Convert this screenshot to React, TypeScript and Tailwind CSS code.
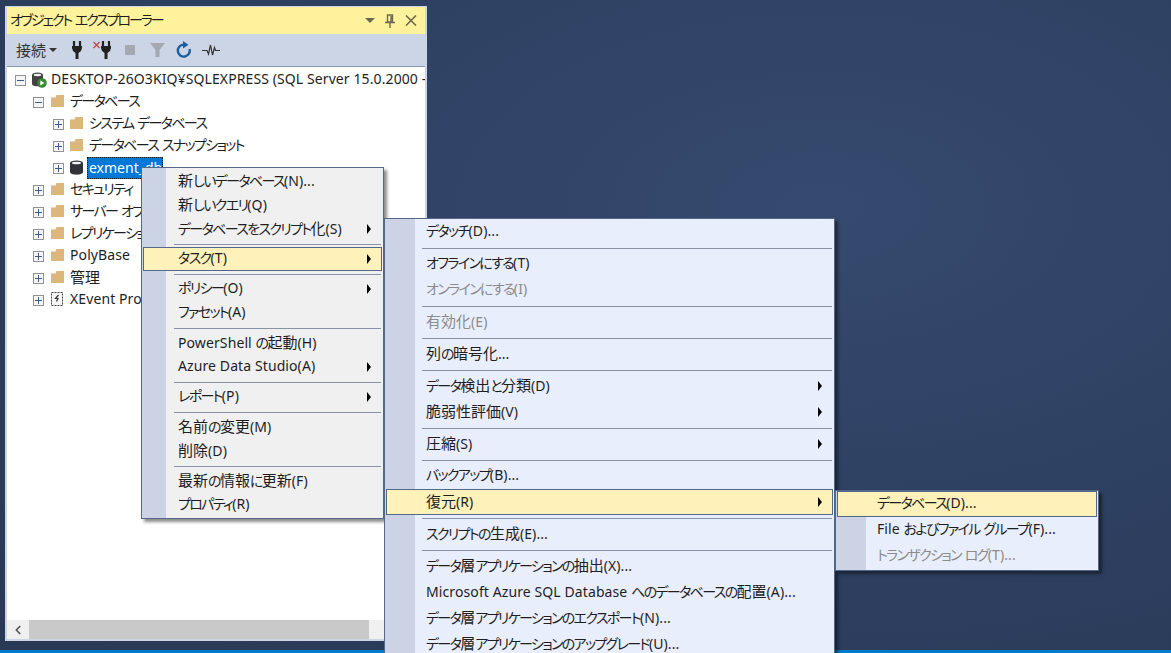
import { ChevronLeft } from 'lucide-react';

const font = "font-['Noto_Sans','Noto_Sans_CJK_JP',sans-serif] [font-feature-settings:'palt'] text-[14px] leading-[22px] text-[#1e1e1e]";

type Item = { label?: string; sub?: boolean; disabled?: boolean; active?: boolean };

const sep: Item = {};

const contextMenu: Item[] = [
  { label: '新しいデータベース(N)...' },
  { label: '新しいクエリ(Q)' },
  { label: 'データベースをスクリプト化(S)', sub: true },
  sep,
  { label: 'タスク(T)', sub: true, active: true },
  sep,
  { label: 'ポリシー(O)', sub: true },
  { label: 'ファセット(A)' },
  sep,
  { label: 'PowerShell の起動(H)' },
  { label: 'Azure Data Studio(A)', sub: true },
  sep,
  { label: 'レポート(P)', sub: true },
  sep,
  { label: '名前の変更(M)' },
  { label: '削除(D)' },
  sep,
  { label: '最新の情報に更新(F)' },
  { label: 'プロパティ(R)' },
];

const taskMenu: Item[] = [
  { label: 'デタッチ(D)...' },
  sep,
  { label: 'オフラインにする(T)' },
  { label: 'オンラインにする(I)', disabled: true },
  sep,
  { label: '有効化(E)', disabled: true },
  sep,
  { label: '列の暗号化...' },
  sep,
  { label: 'データ検出と分類(D)', sub: true },
  { label: '脆弱性評価(V)', sub: true },
  sep,
  { label: '圧縮(S)', sub: true },
  sep,
  { label: 'バックアップ(B)...' },
  { label: '復元(R)', sub: true, active: true },
  sep,
  { label: 'スクリプトの生成(E)...' },
  sep,
  { label: 'データ層アプリケーションの抽出(X)...' },
  { label: 'Microsoft Azure SQL Database へのデータベースの配置(A)...' },
  { label: 'データ層アプリケーションのエクスポート(N)...' },
  { label: 'データ層アプリケーションのアップグレード(U)...' },
];

const restoreMenu: Item[] = [
  { label: 'データベース(D)...', active: true },
  { label: 'File およびファイル グループ(F)...' },
  { label: 'トランザクション ログ(T)...', disabled: true },
];

// le kana est plus serré que le kanji dans la police d'origine
function Txt({ children, tight }: { children: string; tight?: boolean }) {
  const runs = children.split(/([\u3040-\u30ff]+|[\u4e00-\u9fff]+)/).filter(Boolean);
  return (
    <>
      {runs.map((r, i) => {
        if (/^[\u3040-\u30ff]/.test(r)) return <span key={i} className={tight ? 'tracking-[-2.1px]' : 'tracking-[-1.65px]'}>{r}</span>;
        if (/^[\u4e00-\u9fff]/.test(r)) return <span key={i} className="text-[15px]">{r}</span>;
        return <span key={i} className="tracking-[0.1px] whitespace-pre">{r}</span>;
      })}
    </>
  );
}

function Folder() {
  return (
    <svg width="13" height="12" viewBox="0 0 13 12" className="shrink-0 -mt-[2px]">
      <path d="M0 2.5 L0 12 L13 12 L13 0 L5.5 0 L4.5 2.5 Z" fill="#dcb67a" />
    </svg>
  );
}

function Cylinder() {
  return (
    <svg width="13" height="15" viewBox="0 0 13 15" className="shrink-0 -mt-[2px]">
      <path d="M0 3 V12 C0 15.5 13 15.5 13 12 V3 Z" fill="#333337" />
      <ellipse cx="6.5" cy="3" rx="6.5" ry="2.6" fill="#333337" />
      <ellipse cx="6.5" cy="3" rx="4.6" ry="1.3" fill="#f4f4f4" />
    </svg>
  );
}

function ServerIcon() {
  return (
    <svg width="15" height="16" viewBox="0 0 15 16" className="shrink-0">
      <path d="M0 3 V12 C0 15 11 15 11 12 V3 Z" fill="#424242" />
      <ellipse cx="5.5" cy="3" rx="5.5" ry="2.6" fill="#424242" />
      <ellipse cx="5.5" cy="3" rx="3.8" ry="1.2" fill="#f0f0f0" />
      <circle cx="10" cy="11" r="4.8" fill="#388a34" />
      <path d="M8.3 8.6 L12.4 11 L8.3 13.4 Z" fill="#fff" />
    </svg>
  );
}

function XEventIcon() {
  return (
    <svg width="13" height="14" viewBox="0 0 13 14" className="shrink-0 -mt-[2px]">
      <rect x="0.5" y="0.5" width="11" height="13" fill="#f6f6f6" stroke="#424242" strokeDasharray="2 1" />
      <path d="M7.5 3 L4.5 6.5 H7 L5.5 9.5" fill="none" stroke="#333" strokeWidth="1.2" />
    </svg>
  );
}

function Expander({ open }: { open?: boolean }) {
  return (
    <span className="w-[11px] h-[11px] shrink-0 border border-[#919191] bg-[#f5f5f5] relative flex items-center justify-center">
      <span className="w-[7px] h-px bg-[#3c5a8c]" />
      {!open && <span className="absolute w-px h-[7px] bg-[#3c5a8c]" />}
    </span>
  );
}

function TreeRow({ level, open, icon, label, selected }: { level: number; open?: boolean; icon: React.ReactNode; label: string; selected?: boolean }) {
  const pad = level === 0 ? 'pl-[8px]' : level === 1 ? 'pl-[26px]' : 'pl-[46px]';
  return (
    <div className={`h-[22px] flex items-center whitespace-nowrap ${pad}`}>
      <Expander open={open} />
      <span className={`${level === 1 ? 'w-[7px]' : 'w-[6px]'} shrink-0`} />
      <span className="w-[18px] shrink-0 flex items-center">{icon}</span>
      {selected ? (
        <span className="h-[22px] pl-[1px] -ml-[1px] bg-[#0078d7] text-white border border-dotted border-[#1e1e1e] leading-[20px]">{label}</span>
      ) : (
        <span className="pl-[1px] -mt-[2px]"><Txt>{label}</Txt></span>
      )}
    </div>
  );
}

function Menu({ items, strip, textPad, sepPad, bg, width, rowH, pos }: { items: Item[]; strip: string; textPad: string; sepPad: string; bg: string; width: string; rowH: string; pos: string }) {
  return (
    <div className={`absolute ${pos} ${width} ${bg} border border-[#56688a] shadow-[3px_3px_3px_rgba(0,0,0,0.45)] px-px pb-px z-10 ${font}`}>
      <div className={`absolute left-0 top-0 bottom-0 ${strip} bg-[#ccd3e4]`} />
      <div className="relative flex flex-col">
        {items.map((it, i) =>
          it.label ? (
            <div
              key={i}
              className={`${rowH} flex items-center justify-between pr-[11px] whitespace-nowrap ${
                it.active ? 'bg-[#fff1ba] outline outline-1 -outline-offset-1 outline-[#56688a]' : ''
              } ${it.disabled ? 'text-[#8b8b8b]' : ''}`}
            >
              <span className={textPad}><Txt>{it.label}</Txt></span>
              {it.sub && <span className="w-0 h-0 border-y-[5px] border-y-transparent border-l-[4px] border-l-black" />}
            </div>
          ) : (
            <div key={i} className={`h-[6px] flex items-center ${sepPad} pr-[1px]`}>
              <div className="h-px w-full bg-[#8a93a6]" />
            </div>
          ),
        )}
      </div>
    </div>
  );
}

function Toolbar() {
  return (
    <div className="h-[32px] bg-[#ccd5e6] flex items-center pl-[9px] shrink-0">
      <span className="text-[#333] text-[15px] w-[29px] whitespace-nowrap">接続</span>
      <span className="ml-[4px] w-0 h-0 border-x-[4px] border-x-transparent border-t-[4px] border-t-[#333]" />
      <svg width="10" height="18" viewBox="0 0 10 18" className="ml-[15px]">
        <path d="M2 0 V5 M8 0 V5" stroke="#222" strokeWidth="2.2" />
        <path d="M0 5 H10 V7 L9 10 L6.5 12 V18 H3.5 V12 L1 10 L0 7 Z" fill="#222" />
      </svg>
      <svg width="18" height="18" viewBox="0 0 18 18" className="ml-[11px]">
        <path d="M0.5 1 L6.5 7 M6.5 1 L0.5 7" stroke="#c4403a" strokeWidth="1.2" />
        <path d="M10 0 V5 M16 0 V5" stroke="#222" strokeWidth="2.2" />
        <path d="M8 5 H18 V7 L17 10 L14.5 12 V18 H11.5 V12 L9 10 L8 7 Z" fill="#222" />
      </svg>
      <span className="ml-[14px] w-[10px] h-[10px] bg-[#a3a8b3]" />
      <svg width="15" height="16" viewBox="0 0 15 16" className="ml-[15px]">
        <path d="M0 1 H15 L9.5 8 V15 H5.5 V8 Z" fill="#a3a8b3" />
      </svg>
      <svg width="16" height="18" viewBox="0 0 16 18" className="ml-[11px]">
        <path d="M7.5 3.6 A6 6 0 1 0 13.6 8" fill="none" stroke="#1c5e9e" strokeWidth="2.4" />
        <path d="M7 0 L12.5 3.8 L7 7.5 Z" fill="#1c5e9e" />
      </svg>
      <svg width="18" height="12" viewBox="0 0 18 12" className="ml-[10px]">
        <path d="M0 6.5 H5 L6.5 10 L8.5 1 L10.5 11 L12.5 3.5 L13.5 6.5 H18" fill="none" stroke="#333" strokeWidth="1.2" />
      </svg>
    </div>
  );
}

export default function App() {
  return (
    <div className={`relative w-full h-[653px] overflow-hidden flex flex-col bg-[radial-gradient(ellipse_at_70%_32%,#364a6f_0%,#2f4163_45%,#293955_100%)] ${font}`}>
      <div className="flex-1 min-h-0 pt-[6px] pl-[5px] pb-[9px]">
        <div className="w-[422px] h-full border-2 border-t border-[#ccd5e6] bg-white flex flex-col">
          {/* Titre */}
          <div className="h-[27px] bg-[#fff29d] flex items-center justify-between pl-[3px] pr-[8px] shrink-0">
            <span className="-mt-[1px]"><Txt tight>オブジェクト エクスプローラー</Txt></span>
            <div className="flex items-center gap-[10px]">
              <span className="w-0 h-0 border-x-[5px] border-x-transparent border-t-[5px] border-t-[#6b6a50]" />
              <svg width="10" height="14" viewBox="0 0 10 14">
                <path d="M2.5 1 H7.5 V8 H2.5 Z M0 8.5 H10 M5 8 V14 M6 2 V8" fill="none" stroke="#6b6a50" strokeWidth="1.4" />
              </svg>
              <svg width="12" height="11" viewBox="0 0 12 11">
                <path d="M1 0.5 L11 10.5 M11 0.5 L1 10.5" stroke="#6b6a50" strokeWidth="1.6" />
              </svg>
            </div>
          </div>
          <Toolbar />
          {/* Arbre */}
          <div className="flex-1 min-h-0 border-t border-[#8a99b5] pt-[2px] overflow-hidden flex flex-col">
            <div className="flex-1 min-h-0">
              <TreeRow level={0} open icon={<ServerIcon />} label="DESKTOP-26O3KIQ¥SQLEXPRESS (SQL Server 15.0.2000 - sa)" />
              <TreeRow level={1} open icon={<Folder />} label="データベース" />
              <TreeRow level={2} icon={<Folder />} label="システム データベース" />
              <TreeRow level={2} icon={<Folder />} label="データベース スナップショット" />
              <TreeRow level={2} icon={<Cylinder />} label="exment_db" selected />
              <TreeRow level={1} icon={<Folder />} label="セキュリティ" />
              <TreeRow level={1} icon={<Folder />} label="サーバー オブジェクト" />
              <TreeRow level={1} icon={<Folder />} label="レプリケーション" />
              <TreeRow level={1} icon={<Folder />} label="PolyBase" />
              <TreeRow level={1} icon={<Folder />} label="管理" />
              <TreeRow level={1} icon={<XEventIcon />} label="XEvent Profiler" />
            </div>
            <div className="h-[19px] bg-[#f0f0f0] flex items-center shrink-0">
              <span className="w-[22px] flex justify-center">
                <ChevronLeft className="w-[14px] h-[14px] text-[#555]" strokeWidth={3} />
              </span>
              <span className="w-[340px] h-full bg-[#c9c9c9]" />
            </div>
          </div>
        </div>
      </div>
      <div className="h-[3px] bg-[#007acc] shrink-0" />

      <Menu items={contextMenu} strip="w-[24px]" textPad="pl-[35px] -mt-[2px]" sepPad="pl-[31px]" bg="bg-[#f0f0f0]" width="w-[243px]" rowH="h-[24px]" pos="left-[141px] top-[167px] pt-px" />
      <Menu items={taskMenu} strip="w-[30px]" textPad="pl-[40px] -mt-[2px]" sepPad="pl-[36px]" bg="bg-[#e9eefc]" width="w-[451px]" rowH="h-[26px]" pos="left-[384px] top-[218px]" />
      <Menu items={restoreMenu} strip="w-[30px]" textPad="pl-[40px] -mt-[2px]" sepPad="pl-[36px]" bg="bg-[#e9eefc]" width="w-[264px]" rowH="h-[26px]" pos="left-[835px] top-[490px]" />
    </div>
  );
}
